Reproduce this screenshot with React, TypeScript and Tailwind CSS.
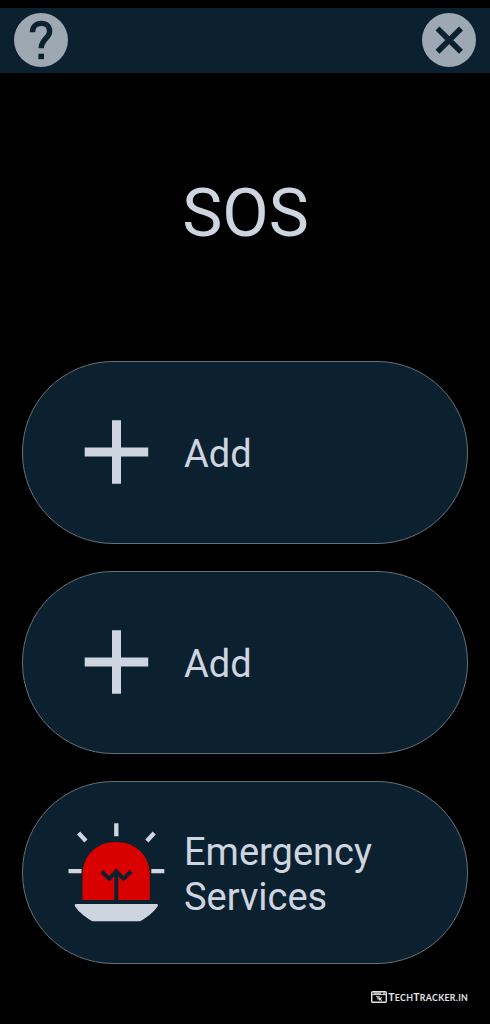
import type { ReactNode } from "react";

function HelpIcon() {
  return (
    <svg className="h-[54px] w-[54px]" viewBox="0 0 54 54" role="img" aria-label="Help">
      <circle cx="27" cy="27" r="27" fill="#9da8b2" />
      <path
        d="M18.5 19.2C18.5 13.4 22 10.4 27.2 10.4S35.6 13.4 35.6 18.4C35.6 25 27.2 26.2 27.2 35.2"
        fill="none"
        stroke="#0c212f"
        strokeWidth="5.4"
      />
      <path d="M24.4 40.7h5.6v5.5h-5.6z" fill="#0c212f" />
    </svg>
  );
}

function CloseIcon() {
  return (
    <svg className="h-[54px] w-[54px]" viewBox="0 0 54 54" role="img" aria-label="Close">
      <circle cx="27" cy="27" r="27" fill="#9da8b2" />
      <path d="M15.5 15.5L39 38.8M39 15.5L15.5 38.8" stroke="#0c212f" strokeWidth="5.6" />
    </svg>
  );
}

function PlusIcon() {
  return (
    <svg className="h-[100px] w-[100px] shrink-0" viewBox="0 0 100 100" aria-hidden="true">
      <path d="M18.7 50H82.2M50.5 18.3V81.7" stroke="#ced5e0" strokeWidth="9" />
    </svg>
  );
}

function SirenIcon() {
  return (
    <svg className="h-[100px] w-[100px] shrink-0" viewBox="0 0 100 100" aria-hidden="true">
      <path
        d="M50.3 1.2V14.2M12.6 11L19.9 19M88.2 11L80.9 19M2.5 49.1H15.5M85.3 49.1H98.3"
        stroke="#ced5e0"
        strokeWidth="4.3"
      />
      <path d="M16.5 78V53C16.5 33 31 20 50 20S83.8 33 83.8 53V78Z" fill="#d90000" />
      <path
        d="M50.3 78.2V49M35.8 49.5L43.2 56.8L50.3 49.3L57.5 56.8L65 49.5"
        fill="none"
        stroke="#0c212f"
        strokeWidth="3.9"
      />
      <path
        d="M9.5 82H91.2Q92.7 82.5 91.5 84.5C87 91 81 95 75.5 98.5Q74.5 99.2 73.5 99.2H27Q26 99.2 25 98.5C19.7 95 13.5 91 9.1 84.5Q8 82.5 9.5 82Z"
        fill="#ced5e0"
      />
    </svg>
  );
}

function SosButton({ icon, children }: { icon: ReactNode; children: ReactNode }) {
  return (
    <button className="flex h-[183px] w-full items-center gap-[18px] rounded-[91px] border border-[#65717a] bg-[#0c212f] pl-[43px] text-left text-[38px] leading-[45px] text-[#ced5e0]">
      {icon}
      <span className="pt-[5px]">{children}</span>
    </button>
  );
}

function Watermark() {
  return (
    <footer className="mt-[26px] flex items-center justify-end gap-px pr-[22px] text-[#e4e4e4]">
      <svg className="h-3 w-4" viewBox="0 0 16 12" aria-hidden="true">
        <rect x="0.7" y="0.7" width="14.6" height="10.6" rx="1" fill="none" stroke="currentColor" strokeWidth="1.4" />
        <path d="M1 3.6H15" stroke="currentColor" />
        <path d="M2.5 2.1H10M12 2.1H14M5 5.7H8.8M7 5.7V8.5M8.4 6.4V9.6M10.8 6.4L8.7 8L10.8 9.6" stroke="currentColor" strokeWidth="1.1" fill="none" />
      </svg>
      <span className="-mr-[0.2px] pt-px font-['Lato',sans-serif] text-[8.8px] leading-3 font-bold tracking-[0.3px]">
        <span className="text-[10.5px]">T</span>ECH<span className="text-[10.5px]">T</span>RACKER.IN
      </span>
    </footer>
  );
}

export default function App() {
  return (
    <div className="flex h-[1024px] w-[490px] flex-col overflow-hidden bg-black pt-[7.5px] font-['Roboto',sans-serif]">
      <header className="flex h-[65px] shrink-0 items-center justify-between bg-[#0c212f] pr-3.5 pl-3.5">
        <button>
          <HelpIcon />
        </button>
        <button>
          <CloseIcon />
        </button>
      </header>
      <h1 className="flex h-[288px] shrink-0 items-center justify-center pb-[7px] pl-px text-[67.5px] leading-none text-[#ced5e0]">
        SOS
      </h1>
      <main className="flex flex-col gap-[27px] px-[22px]">
        <SosButton icon={<PlusIcon />}>Add</SosButton>
        <SosButton icon={<PlusIcon />}>Add</SosButton>
        <SosButton icon={<SirenIcon />}>
          Emergency
          <br />
          Services
        </SosButton>
      </main>
      <Watermark />
    </div>
  );
}
